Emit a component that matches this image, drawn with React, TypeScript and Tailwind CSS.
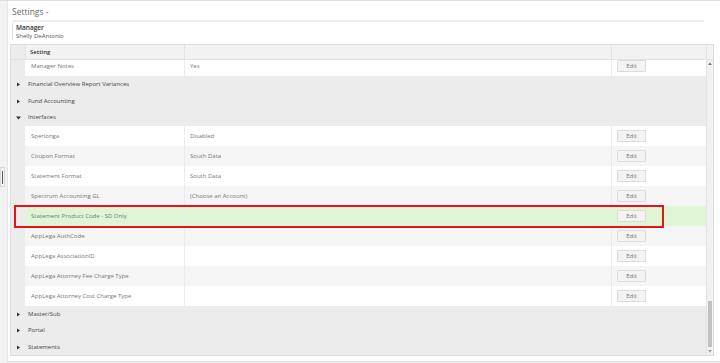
const rows = [
  { label: "Sperlonga", value: "Disabled", bg: "bg-white" },
  { label: "Coupon Format", value: "South Data", bg: "bg-[#f5f5f5]" },
  { label: "Statement Format", value: "South Data", bg: "bg-white" },
  { label: "Spectrum Accounting GL", value: "(Choose an Account)", bg: "bg-[#f5f5f5]" },
  { label: "Statement Product Code - SD Only", value: "", bg: "bg-[#dff5d6]", marked: true },
  { label: "AppLega AuthCode", value: "", bg: "bg-[#f5f5f5]" },
  { label: "AppLega AssociationID", value: "", bg: "bg-white" },
  { label: "AppLega Attorney Fee Charge Type", value: "", bg: "bg-[#f5f5f5]" },
  { label: "AppLega Attorney Cost Charge Type", value: "", bg: "bg-white" },
];

function Caret({ open }: { open?: boolean }) {
  return open ? (
    <svg width="5" height="4" viewBox="0 0 5 4" className="ml-[5px] mr-[7px]">
      <path d="M0 0.5 L5 0.5 L2.5 3.5 Z" fill="#333" />
    </svg>
  ) : (
    <svg width="5" height="5" viewBox="0 0 5 5" className="ml-[5px] mr-[7px]">
      <path d="M1 0.5 L4 2.5 L1 4.5 Z" fill="#333" />
    </svg>
  );
}

function Group({ title, open, h }: { title: string; open?: boolean; h: string }) {
  return (
    <div className={`flex items-center ${h} text-[6px] text-[#444]`}>
      <Caret open={open} />
      <span>{title}</span>
    </div>
  );
}

function EditButton() {
  return (
    <div className="ml-[5px] w-[29px] h-[12px] flex items-center justify-center bg-[#f3f3f3] border border-[#dcdcdc] rounded-[1px] text-[6px] text-[#777]">
      Edit
    </div>
  );
}

function Row({ label, value, bg, marked }: { label: string; value: string; bg: string; marked?: boolean }) {
  return (
    <div className="relative flex h-[20px] text-[6px] text-[#777]">
      <div className="w-[14px]" />
      <div className={`w-[159px] flex items-center pl-[6px] ${bg}`}>{label}</div>
      <div className={`w-[427px] flex items-center pl-[5px] border-l border-[#ebebeb] ${bg}`}>{value}</div>
      <div className={`w-[95px] flex items-center border-l border-[#ebebeb] ${bg}`}>
        <EditButton />
      </div>
      {marked && (
        <div className="absolute z-10 left-[3px] -top-[1px] w-[650px] h-[23px] border-2 border-[#e3141b] pointer-events-none" />
      )}
    </div>
  );
}

export default function App() {
  return (
    <div className="w-[720px] h-[363px] overflow-hidden flex bg-[#f2f2f2] border-t border-[#dedede] font-['Open_Sans',sans-serif]">
      <div className="relative w-[8px] border-r border-[#e6e6e6]">
        <div className="absolute left-0 top-[166px] w-[5px] h-[20px] border border-[#d8d8d8] bg-[#f7f7f7]" />
        <div className="absolute left-[2px] top-[170px] w-[1px] h-[13px] bg-[#555]" />
      </div>

      <div className="flex-1 flex flex-col bg-white border-b border-[#dcdcdc] mb-[1px]">
        <div className="pl-[4px] pt-[5px] leading-[12px] text-[8.5px] text-[#6a6a6a]">Settings -</div>
        <div className="mt-[2px] ml-[4px] w-[692px] h-[2px] bg-[#eeeeee]" />

        <div className="mt-[1px] ml-[4px] pl-[3px] pt-[1px] h-[17px] border-l border-[#dddddd]">
          <div className="leading-[8px] text-[6.5px] font-semibold text-[#333]">Manager</div>
          <div className="leading-[8px] text-[6px] text-[#555]">Shelly DeAntonio</div>
        </div>

        <div className="mt-[4px] ml-[2px] w-[704px] h-[312px] flex flex-col border border-[#dddddd] bg-[#ececec]">
          <div className="flex h-[15px] border-b border-[#e2e2e2] text-[6px] font-semibold text-[#333]">
            <div className="w-[14px]" />
            <div className="w-[159px] flex items-center pl-[4px] bg-[#f2f2f2] border-l border-[#e2e2e2]">Setting</div>
            <div className="w-[427px] bg-[#f2f2f2] border-l border-[#e2e2e2]" />
            <div className="w-[95px] bg-[#f2f2f2] border-l border-[#e2e2e2]" />
            <div className="w-[7px] bg-[#f2f2f2] border-l border-[#e2e2e2]" />
          </div>

          <div className="flex flex-1 overflow-hidden">
            <div className="w-[695px] overflow-hidden">
              <div className="-mt-[4px]">
                <Row label="Manager Notes" value="Yes" bg="bg-white" />
              </div>
              <Group title="Financial Overview Report Variances" h="h-[17px]" />
              <Group title="Fund Accounting" h="h-[16px]" />
              <Group title="Interfaces" open h="h-[17px]" />
              {rows.map((r) => (
                <Row key={r.label} {...r} />
              ))}
              <Group title="Master/Sub" h="h-[16px]" />
              <Group title="Portal" h="h-[17px]" />
              <Group title="Statements" h="h-[16px]" />
            </div>

            <div className="w-[7px] flex flex-col bg-[#f1f1f1] border-l border-[#e4e4e4]">
              <div className="h-[7px] flex items-center justify-center">
                <svg width="4" height="3" viewBox="0 0 4 3">
                  <path d="M0 3 L2 0.5 L4 3 Z" fill="#777" />
                </svg>
              </div>
              <div className="flex-1" />
              <div className="h-[46px] mx-[1px] bg-[#c1c1c1]" />
              <div className="h-[8px] flex items-center justify-center">
                <svg width="4" height="3" viewBox="0 0 4 3">
                  <path d="M0 0 L4 0 L2 2.5 Z" fill="#999" />
                </svg>
              </div>
            </div>
          </div>
        </div>
      </div>
    </div>
  );
}
